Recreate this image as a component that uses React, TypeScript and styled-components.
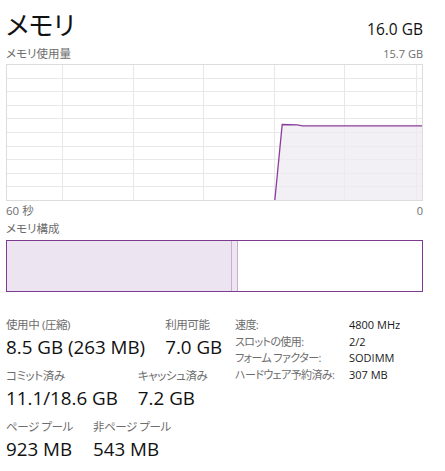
import React from "react";
import styled, { createGlobalStyle } from "styled-components";

const Global = createGlobalStyle`
  html, body { margin: 0; padding: 0; background: #ffffff; }
  body {
    font-family: "Open Sans", "Noto Sans CJK JP", sans-serif;
    color: #1a1a1a;
    font-feature-settings: "palt" 1;
  }
`;

const JP = `"Open Sans", "Noto Sans CJK JP", sans-serif`;

const Page = styled.div`
  width: 445px;
  height: 471px;
  box-sizing: border-box;
  padding: 8px 22px 0 6px;
  display: flex;
  flex-direction: column;
  overflow: hidden;
`;

const HeaderRow = styled.div`
  display: flex;
  justify-content: space-between;
  align-items: baseline;
  height: 36px;
`;

const Title = styled.h1`
  margin: 0;
  font-family: ${JP};
  font-weight: 400;
  font-size: 26px;
  line-height: 34px;
  color: #111;
`;

const Total = styled.div`
  font-family: ${JP};
  font-size: 15.5px;
  color: #111;
`;

const CaptionRow = styled.div<{ $mt?: number }>`
  display: flex;
  justify-content: space-between;
  align-items: baseline;
  margin-top: ${(p) => p.$mt ?? 0}px;
  font-family: ${JP};
  font-size: 11.5px;
  line-height: 16px;
  color: #6d6d6d;
`;

const SmallNum = styled.span`
  font-size: 11px;
`;

const ChartBox = styled.div`
  margin-top: 2px;
  height: 137px;
  line-height: 0;
`;

const CompBar = styled.div`
  margin-top: 3px;
  height: 52px;
  box-sizing: border-box;
  border: 1.5px solid #7d3b8f;
  display: flex;
`;

const Segment = styled.div<{ $w: number; $fill: string; $edge?: boolean }>`
  width: ${(p) => p.$w}px;
  flex: none;
  background: ${(p) => p.$fill};
  box-sizing: border-box;
  border-right: ${(p) => (p.$edge ? "1px solid #c8aed1" : "none")};
`;

const Rest = styled.div`
  flex: 1;
  background: #fff;
`;

const Stats = styled.div`
  margin-top: 25px;
  display: flex;
`;

const LeftStats = styled.div`
  width: 229px;
  display: flex;
  flex-direction: column;
  gap: 7px;
`;

const StatRow = styled.div`
  display: flex;
  gap: 20px;
`;

const Stat = styled.div`
  display: flex;
  flex-direction: column;
`;

const StatLabel = styled.div`
  font-family: ${JP};
  font-size: 11.5px;
  line-height: 16px;
  letter-spacing: -0.4px;
  color: #6d6d6d;
`;

const StatValue = styled.div`
  font-family: ${JP};
  font-size: 18.8px;
  line-height: 28px;
  color: #111;
`;

const Specs = styled.div`
  display: grid;
  grid-template-columns: 114px auto;
  align-content: start;
`;

const SpecLabel = styled.div`
  font-family: ${JP};
  font-size: 11px;
  line-height: 16.5px;
  letter-spacing: -0.6px;
  color: #6d6d6d;
  white-space: nowrap;
`;

const SpecValue = styled.div`
  font-family: ${JP};
  font-size: 11px;
  line-height: 16.5px;
  color: #1a1a1a;
`;

function UsageChart() {
  const W = 416;
  const H = 136;
  const vx = [56, 127, 197, 268, 338, 410];
  const hy = Array.from({ length: 9 }, (_, i) => (i + 1) * (H / 10));
  const pts = "268.3,136 275.7,60 290.7,60.3 296,61.3 416,61.3";
  return (
    <svg width={W + 1} height={H + 1} viewBox={`-0.5 -0.5 ${W + 1} ${H + 1}`}>
      {hy.map((y) => (
        <line key={"h" + y} x1={0} x2={W} y1={Math.round(y)} y2={Math.round(y)} stroke="#e8e8e8" strokeWidth={1} />
      ))}
      {vx.map((x) => (
        <line key={"v" + x} x1={x} x2={x} y1={0} y2={H} stroke="#e8e8e8" strokeWidth={1} />
      ))}
      <polygon points={`${pts} 416,136`} fill="#eeebf1" fillOpacity={0.75} />
      <polyline points={pts} fill="none" stroke="#8a3e9c" strokeWidth={1.3} />
      <rect x={0} y={0} width={W} height={H} fill="none" stroke="#dcdcdc" strokeWidth={1} />
    </svg>
  );
}

export default function App() {
  return (
    <>
      <Global />
      <Page>
        <HeaderRow>
          <Title>メモリ</Title>
          <Total>16.0 GB</Total>
        </HeaderRow>
        <CaptionRow $mt={2}>
          <span>メモリ使用量</span>
          <SmallNum>15.7 GB</SmallNum>
        </CaptionRow>
        <ChartBox>
          <UsageChart />
        </ChartBox>
        <CaptionRow $mt={2}>
          <span>60 秒</span>
          <SmallNum>0</SmallNum>
        </CaptionRow>
        <CaptionRow $mt={2}>
          <span>メモリ構成</span>
        </CaptionRow>
        <CompBar>
          <Segment $w={225} $fill="#ede4f1" $edge />
          <Segment $w={6} $fill="#efe6f3" $edge />
          <Rest />
        </CompBar>
        <Stats>
          <LeftStats>
            <StatRow>
              <Stat>
                <StatLabel>使用中 (圧縮)</StatLabel>
                <StatValue>8.5 GB (263 MB)</StatValue>
              </Stat>
              <Stat>
                <StatLabel>利用可能</StatLabel>
                <StatValue>7.0 GB</StatValue>
              </Stat>
            </StatRow>
            <StatRow>
              <Stat>
                <StatLabel>コミット済み</StatLabel>
                <StatValue>11.1/18.6 GB</StatValue>
              </Stat>
              <Stat>
                <StatLabel>キャッシュ済み</StatLabel>
                <StatValue>7.2 GB</StatValue>
              </Stat>
            </StatRow>
            <StatRow>
              <Stat>
                <StatLabel>ページ プール</StatLabel>
                <StatValue>923 MB</StatValue>
              </Stat>
              <Stat>
                <StatLabel>非ページ プール</StatLabel>
                <StatValue>543 MB</StatValue>
              </Stat>
            </StatRow>
          </LeftStats>
          <Specs>
            <SpecLabel>速度:</SpecLabel>
            <SpecValue>4800 MHz</SpecValue>
            <SpecLabel>スロットの使用:</SpecLabel>
            <SpecValue>2/2</SpecValue>
            <SpecLabel>フォーム ファクター:</SpecLabel>
            <SpecValue>SODIMM</SpecValue>
            <SpecLabel>ハードウェア予約済み:</SpecLabel>
            <SpecValue>307 MB</SpecValue>
          </Specs>
        </Stats>
      </Page>
    </>
  );
}
